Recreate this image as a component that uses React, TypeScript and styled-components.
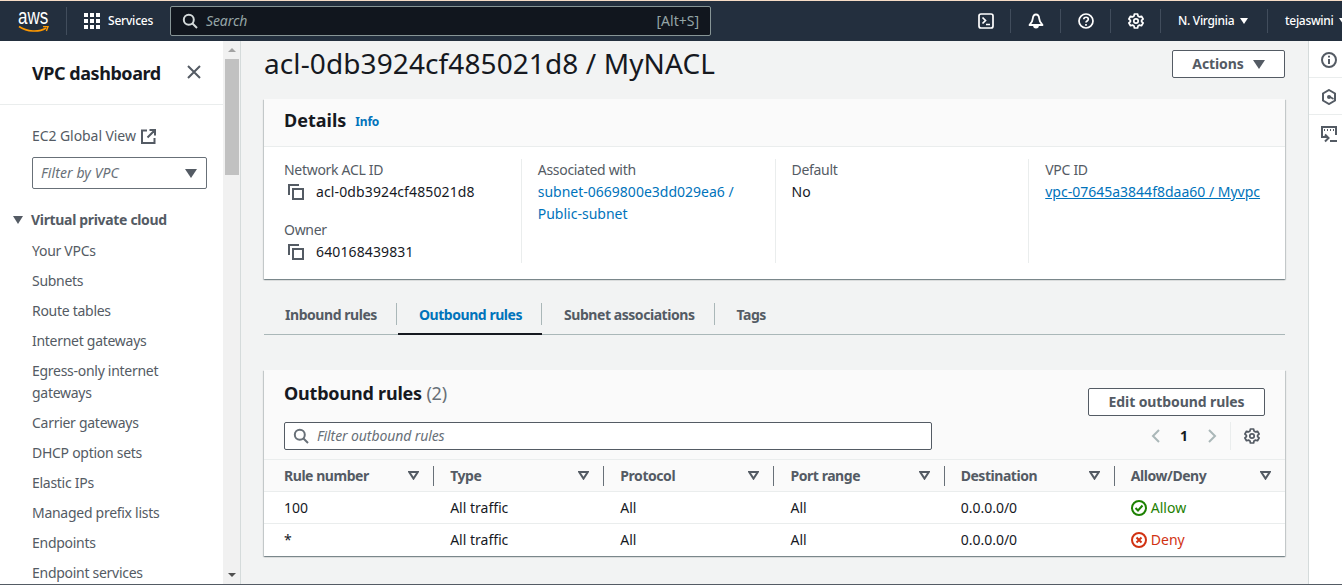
import styled, { createGlobalStyle } from "styled-components";

const GlobalStyle = createGlobalStyle`
  html, body {
    margin: 0;
    padding: 0;
    height: 585px;
    overflow: hidden;
    background: #f2f3f3;
    font-family: "Noto Sans", "Open Sans", sans-serif;
    font-size: 14px;
    line-height: 22px;
    color: #16191f;
  }
  * { box-sizing: border-box; }
`;

const Page = styled.div`
  width: 1342px;
  height: 585px;
  display: flex;
  flex-direction: column;
  overflow: hidden;
  border-top: 1px solid #f6dcc6;
  border-bottom: 1px solid #545b64;
`;

const TopNav = styled.header`
  height: 40px;
  flex: none;
  background: #232f3e;
  display: flex;
  align-items: center;
  color: #fff;
  overflow: hidden;
`;

const AwsLogo = styled.div`
  width: 67px;
  flex: none;
  height: 28px;
  padding-left: 18px;
  border-right: 1px solid #414d5c;
  display: flex;
  flex-direction: column;
  line-height: 16px;
  font-family: "Liberation Sans", sans-serif;
  font-size: 17px;
  span { display: block; transform: scaleY(1.3); transform-origin: 0 60%; margin-top: 3px; }
  svg { margin-top: -1px; }
`;

const ServicesLink = styled.div`
  display: flex;
  align-items: center;
  gap: 8px;
  padding-left: 17px;
  width: 103px;
  flex: none;
  font-size: 12px;
  font-weight: 500;
  letter-spacing: -0.2px;
`;

const SearchBox = styled.div`
  width: 541px;
  height: 30px;
  flex: none;
  background: #11161e;
  border: 1px solid #879596;
  border-radius: 2px;
  display: flex;
  align-items: center;
  padding: 0 11px 0 11px;
  gap: 8px;
  color: #95a5a6;
  font-size: 14px;
  span:first-of-type { font-style: italic; flex: 1; letter-spacing: -0.1px; }
`;

const NavIcons = styled.div`
  display: flex;
  align-items: center;
  margin-left: 250px;
  flex: none;
`;

const NavIconCell = styled.div`
  width: 50px;
  height: 24px;
  display: flex;
  align-items: center;
  justify-content: center;
  border-right: 1px solid #414d5c;
`;

const NavMenu = styled.div<{ $width: number }>`
  width: ${(p) => p.$width}px;
  height: 24px;
  flex: none;
  display: flex;
  align-items: center;
  gap: 6px;
  padding-left: 17px;
  font-size: 12px;
  font-weight: 500;
  letter-spacing: -0.3px;
  white-space: nowrap;
  border-right: 1px solid #414d5c;
  &:last-child { border-right: none; }
`;

const NavCaret = styled.i`
  display: block;
  width: 0;
  height: 0;
  border-left: 4px solid transparent;
  border-right: 4px solid transparent;
  border-top: 6px solid #fff;
`;

const Body = styled.div`
  flex: 1;
  min-height: 0;
  display: flex;
`;

const Sidebar = styled.aside`
  width: 223px;
  flex: none;
  background: #fff;
  overflow: hidden;
`;

const SidebarHeader = styled.div`
  height: 64px;
  border-bottom: 1px solid #eaeded;
  padding: 20px 21px 0 32px;
  display: flex;
  justify-content: space-between;
  align-items: flex-start;
  font-size: 18px;
  font-weight: 700;
  line-height: 24px;
  letter-spacing: -0.45px;
  svg { margin-top: 3px; }
`;

const GlobalLink = styled.div`
  margin: 20px 0 10px 32px;
  display: flex;
  align-items: center;
  gap: 5px;
  color: #545b64;
  letter-spacing: -0.07px;
`;

const VpcSelect = styled.div`
  margin-left: 32px;
  width: 175px;
  height: 32px;
  background: #fff;
  border: 1px solid #687078;
  border-radius: 2px;
  padding: 0 9px 0 8px;
  display: flex;
  align-items: center;
  justify-content: space-between;
  color: #687078;
  font-style: italic;
  letter-spacing: 0.1px;
`;

const Caret = styled.i<{ $color?: string }>`
  display: block;
  width: 0;
  height: 0;
  border-left: 6px solid transparent;
  border-right: 6px solid transparent;
  border-top: 9px solid ${(p) => p.$color ?? "#545b64"};
`;

const NavGroupTitle = styled.div`
  margin: 20px 0 0 13px;
  display: flex;
  align-items: center;
  gap: 8px;
  font-weight: 700;
  font-size: 14px;
  letter-spacing: -0.33px;
  color: #545b64;
  i { border-left-width: 5px; border-right-width: 5px; border-top-width: 8px; }
`;

const NavList = styled.ul`
  list-style: none;
  margin: 9px 0 0;
  padding: 0 0 0 32px;
`;

const NavItem = styled.li`
  width: 150px;
  padding-bottom: 8px;
  color: #545b64;
  letter-spacing: -0.28px;
`;

const ScrollTrack = styled.div`
  width: 17px;
  flex: none;
  background: #f1f1f1;
  display: flex;
  flex-direction: column;
  align-items: center;
  padding-top: 7px;
`;

const ScrollThumb = styled.div`
  width: 14px;
  height: 116px;
  margin-top: 7px;
  background: #c1c1c1;
  flex: none;
`;

const ScrollArrow = styled.i<{ $down?: boolean }>`
  display: block;
  width: 0;
  height: 0;
  border-left: 4px solid transparent;
  border-right: 4px solid transparent;
  ${(p) => (p.$down ? "border-top: 4px solid #505050; margin-top: auto; margin-bottom: 7px;" : "border-bottom: 4px solid #a3a3a3;")}
`;

const Main = styled.main`
  flex: 1;
  min-width: 0;
  border-left: 1px solid #d5dbdb;
  padding: 0 23px;
`;

const TitleRow = styled.div`
  height: 58px;
  display: flex;
  justify-content: space-between;
  padding-top: 9px;
`;

const Title = styled.h1`
  margin: 0;
  font-size: 28px;
  line-height: 26px;
  font-weight: 400;
  letter-spacing: 0.1px;
`;

const OutlineButton = styled.button<{ $width: number }>`
  width: ${(p) => p.$width}px;
  height: 28px;
  flex: none;
  display: flex;
  align-items: center;
  justify-content: center;
  gap: 9px;
  background: #fff;
  border: 1px solid #545b64;
  border-radius: 2px;
  color: #545b64;
  font-family: inherit;
  font-size: 14px;
  font-weight: 700;
  letter-spacing: -0.1px;
  line-height: 20px;
  padding: 0;
`;

const Card = styled.section`
  background: #fff;
  box-shadow: 0 1px 1px 0 rgba(0, 28, 36, 0.3), 1px 1px 1px 0 rgba(0, 28, 36, 0.15), -1px 1px 1px 0 rgba(0, 28, 36, 0.15);
`;

const CardHeader = styled.div`
  height: 48px;
  padding: 9px 20px 0;
  background: #fafafa;
  border-bottom: 1px solid #eaeded;
  display: flex;
  align-items: flex-start;
  gap: 9px;
`;

const CardTitle = styled.h2<{ $tight?: boolean }>`
  margin: 0;
  font-size: 18px;
  line-height: 24px;
  font-weight: 700;
  ${(p) => (p.$tight ? "letter-spacing: -0.2px; margin-top: -7px;" : "")}
  span { font-weight: 400; color: #687078; }
`;

const InfoLink = styled.a`
  font-size: 12px;
  font-weight: 700;
  letter-spacing: -0.2px;
  color: #0073bb;
  margin-top: 3px;
`;

const DetailGrid = styled.div`
  display: grid;
  grid-template-columns: repeat(4, 1fr);
  padding: 12px 3px 16px;
`;

const DetailColumn = styled.div`
  padding-left: 16px;
  border-left: 1px solid #eaeded;
  min-height: 104px;
  &:first-child { border-left-color: transparent; }
`;

const Label = styled.div<{ $gap?: boolean }>`
  color: #545b64;
  letter-spacing: -0.3px;
  margin-top: ${(p) => (p.$gap ? "16px" : "0")};
`;

const CopyValue = styled.div`
  display: flex;
  align-items: center;
  gap: 12px;
  padding-left: 4px;
  letter-spacing: 0.12px;
`;

const DetailLink = styled.a<{ $underline?: boolean }>`
  display: block;
  color: #0073bb;
  text-decoration: ${(p) => (p.$underline ? "underline" : "none")};
  white-space: pre-line;
`;

const TabBar = styled.nav`
  display: flex;
  height: 40px;
  margin-top: 16px;
  border-bottom: 1px solid #aab7b8;
`;

const Tab = styled.div<{ $active?: boolean }>`
  position: relative;
  padding: 9px 21px 0;
  height: 39px;
  font-weight: 700;
  letter-spacing: -0.45px;
  color: ${(p) => (p.$active ? "#0073bb" : "#545b64")};
  white-space: nowrap;
  &:first-child { padding-right: 20px; }
  &:nth-child(2) { padding-left: 22px; padding-right: 20px; }
  &:nth-child(3) { padding-left: 22px; }
  &:not(:last-child)::after {
    content: "";
    position: absolute;
    right: 0;
    top: 8px;
    height: 22px;
    width: 1px;
    background: #aab7b8;
  }
  ${(p) =>
    p.$active
      ? `&::before {
    content: "";
    position: absolute;
    left: 1px;
    right: 0;
    bottom: -1px;
    height: 2px;
    background: #16191f;
  }`
      : ""}
`;

const RulesCard = styled(Card)`
  margin-top: 35px;
`;

const RulesHeader = styled.div`
  height: 90px;
  background: #fafafa;
  border-bottom: 1px solid #eaeded;
  padding: 18px 20px 0;
  display: grid;
  grid-template-columns: 648px 1fr;
  grid-template-rows: 28px 28px;
  row-gap: 6px;
`;

const FilterBox = styled.div`
  grid-column: 1;
  background: #fff;
  border: 1px solid #545b64;
  border-radius: 2px;
  display: flex;
  align-items: center;
  gap: 8px;
  padding: 0 8px;
  font-style: italic;
  letter-spacing: -0.1px;
  color: #687078;
`;

const RightAlign = styled.div`
  grid-column: 2;
  display: flex;
  justify-content: flex-end;
  align-items: center;
`;

const Pager = styled.div`
  display: flex;
  align-items: center;
  height: 28px;
  font-weight: 700;
  font-size: 14px;
  gap: 19px;
  padding-right: 5px;
`;

const PagerGear = styled.div`
  height: 28px;
  display: flex;
  align-items: center;
  padding-left: 13px;
  margin-left: -6px;
  border-left: 1px solid #eaeded;
`;

const RulesTable = styled.table`
  width: 100%;
  table-layout: fixed;
  border-collapse: collapse;
`;

const HeadCell = styled.th`
  height: 31px;
  padding: 1px 0 0 16px;
  background: #fafafa;
  border-bottom: 1px solid #eaeded;
  color: #545b64;
  font-size: 14px;
  font-weight: 700;
  letter-spacing: -0.45px;
  text-align: left;
  &:first-child { padding-left: 20px; }
`;

const HeadInner = styled.div`
  display: flex;
  justify-content: space-between;
  align-items: center;
  height: 20px;
  padding-right: 14px;
  border-right: 1px solid #687078;
  &.last { border-right: none; }
`;

const Cell = styled.td`
  height: 32px;
  padding: 1px 0 0 16px;
  border-bottom: 1px solid #eaeded;
  &:first-child { padding-left: 20px; }
  tr:last-child > & { border-bottom: none; height: 33px; padding-top: 0; }
`;

const Status = styled.div<{ $color: string }>`
  display: flex;
  align-items: center;
  gap: 4px;
  color: ${(p) => p.$color};
`;

const RightRail = styled.aside`
  width: 34px;
  flex: none;
  background: #fff;
  border-left: 1px solid #d5dbdb;
`;

const RailItem = styled.div`
  height: 37px;
  display: flex;
  align-items: center;
  justify-content: center;
  padding: 1px 0 0 7px;
  border-bottom: 1px solid #eaeded;
  &:last-child { border-bottom: none; }
`;

const CopyIcon = () => (
  <svg width="16" height="16" viewBox="0 0 16 16" fill="none" stroke="#545b64" strokeWidth="2">
    <path d="M11 1H1v10" />
    <rect x="5" y="5" width="10" height="10" />
  </svg>
);

const Gear = ({ color, size = 16 }: { color: string; size?: number }) => (
  <svg width={size} height={size} viewBox="0 0 16 16" fill="none" stroke={color} strokeWidth="1.7" strokeLinejoin="round">
    <circle cx="8" cy="8" r="2.2" />
    <path d="M6.4 1h3.2l.4 2 1.5.9 2-.6 1.6 2.7-1.5 1.3v1.4l1.5 1.3-1.6 2.7-2-.6-1.5.9-.4 2H6.4l-.4-2-1.5-.9-2 .6L.9 10l1.5-1.3V7.3L.9 6l1.6-2.7 2 .6 1.5-.9z" />
  </svg>
);

const SearchIcon = ({ color }: { color: string }) => (
  <svg width="16" height="16" viewBox="0 0 16 16" fill="none" stroke={color} strokeWidth="2">
    <circle cx="6.8" cy="6.8" r="5" />
    <path d="M10.5 10.5L15 15" />
  </svg>
);

const FilterCaret = () => (
  <svg width="11" height="9" viewBox="0 0 11 9" fill="none" stroke="#545b64" strokeWidth="2">
    <path d="M1.2 1h8.6L5.5 7.6z" />
  </svg>
);

const Chevron = ({ d }: { d: string }) => (
  <svg width="10" height="14" viewBox="0 0 10 14" fill="none" stroke="#aab7b8" strokeWidth="2">
    <path d={d} />
  </svg>
);

const sideItems = [
  "Your VPCs",
  "Subnets",
  "Route tables",
  "Internet gateways",
  "Egress-only internet gateways",
  "Carrier gateways",
  "DHCP option sets",
  "Elastic IPs",
  "Managed prefix lists",
  "Endpoints",
  "Endpoint services",
];

const columns = ["Rule number", "Type", "Protocol", "Port range", "Destination", "Allow/Deny"];

const rows = [
  { rule: "100", allow: true },
  { rule: "*", allow: false },
];

export default function App() {
  return (
    <>
      <GlobalStyle />
      <Page>
        <TopNav>
          <AwsLogo>
            <span>aws</span>
            <svg width="32" height="9" viewBox="0 0 32 9" fill="none">
              <path d="M1 1.5C9 7 21 7.5 28 3" stroke="#ff9900" strokeWidth="1.6" />
              <path d="M25 1.6h5l-1.6 4.4" stroke="#ff9900" strokeWidth="1.4" />
            </svg>
          </AwsLogo>
          <ServicesLink>
            <svg width="16" height="16" viewBox="0 0 16 16" fill="#fff">
              {[0, 6, 12].flatMap((y) =>
                [0, 6, 12].map((x) => <rect key={`${x}-${y}`} x={x} y={y} width="4" height="4" />)
              )}
            </svg>
            Services
          </ServicesLink>
          <SearchBox>
            <SearchIcon color="#d5dbdb" />
            <span>Search</span>
            <span>[Alt+S]</span>
          </SearchBox>
          <NavIcons>
            <NavIconCell>
              <svg width="16" height="16" viewBox="0 0 16 16" fill="none" stroke="#fff" strokeWidth="1.7">
                <rect x="1" y="1" width="14" height="14" rx="2" />
                <path d="M4.5 4.5L7.5 7.5 4.5 10.5M8 11.5h4" />
              </svg>
            </NavIconCell>
            <NavIconCell>
              <svg width="16" height="16" viewBox="0 0 16 16" fill="none" stroke="#fff" strokeWidth="1.8" strokeLinejoin="round">
                <path d="M8 1.5C5.800 1.500 5 3.300 4.800 5.500L4 8.500 1.500 12h13L12 8.500l-.8-3C11 3.300 10.200 1.500 8 1.500z" />
                <path d="M6 12.500a2 2 0 0 0 4 0z" fill="#fff" />
              </svg>
            </NavIconCell>
            <NavIconCell>
              <svg width="16" height="16" viewBox="0 0 16 16" fill="none" stroke="#fff" strokeWidth="1.7">
                <circle cx="8" cy="8" r="7" />
                <path d="M5.800 6.200C5.800 3.600 10.300 3.600 10.300 6.200c0 1.800-2.300 1.700-2.300 3.400" />
                <path d="M8 11v1.700" />
              </svg>
            </NavIconCell>
            <NavIconCell>
              <Gear color="#fff" />
            </NavIconCell>
          </NavIcons>
          <NavMenu $width={107}>
            N. Virginia <NavCaret />
          </NavMenu>
          <NavMenu $width={76}>
            tejaswini <NavCaret />
          </NavMenu>
        </TopNav>
        <Body>
          <Sidebar>
            <SidebarHeader>
              VPC dashboard
              <svg width="16" height="16" viewBox="0 0 16 16" fill="none" stroke="#545b64" strokeWidth="2">
                <path d="M2 2l12 12M14 2L2 14" />
              </svg>
            </SidebarHeader>
            <GlobalLink>
              EC2 Global View
              <svg width="15" height="15" viewBox="0 0 15 15" fill="none" stroke="#545b64" strokeWidth="2">
                <path d="M6 1.500H1v12.500h12.500V9M8.500 1h5.500v5.500M14 1L6.500 8.500" />
              </svg>
            </GlobalLink>
            <VpcSelect>
              Filter by VPC
              <Caret />
            </VpcSelect>
            <NavGroupTitle>
              <Caret />
              Virtual private cloud
            </NavGroupTitle>
            <NavList>
              {sideItems.map((item) => (
                <NavItem key={item}>{item}</NavItem>
              ))}
            </NavList>
          </Sidebar>
          <ScrollTrack>
            <ScrollArrow />
            <ScrollThumb />
            <ScrollArrow $down />
          </ScrollTrack>
          <Main>
            <TitleRow>
              <Title>acl-0db3924cf485021d8 / MyNACL</Title>
              <OutlineButton $width={113}>
                Actions
                <Caret />
              </OutlineButton>
            </TitleRow>
            <Card>
              <CardHeader>
                <CardTitle>Details</CardTitle>
                <InfoLink>Info</InfoLink>
              </CardHeader>
              <DetailGrid>
                <DetailColumn>
                  <Label>Network ACL ID</Label>
                  <CopyValue>
                    <CopyIcon />
                    acl-0db3924cf485021d8
                  </CopyValue>
                  <Label $gap>Owner</Label>
                  <CopyValue>
                    <CopyIcon />
                    640168439831
                  </CopyValue>
                </DetailColumn>
                <DetailColumn>
                  <Label>Associated with</Label>
                  <DetailLink>{"subnet-0669800e3dd029ea6 /\nPublic-subnet"}</DetailLink>
                </DetailColumn>
                <DetailColumn>
                  <Label>Default</Label>
                  No
                </DetailColumn>
                <DetailColumn>
                  <Label>VPC ID</Label>
                  <DetailLink $underline>vpc-07645a3844f8daa60 / Myvpc</DetailLink>
                </DetailColumn>
              </DetailGrid>
            </Card>
            <TabBar>
              <Tab>Inbound rules</Tab>
              <Tab $active>Outbound rules</Tab>
              <Tab>Subnet associations</Tab>
              <Tab>Tags</Tab>
            </TabBar>
            <RulesCard>
              <RulesHeader>
                <CardTitle $tight>
                  Outbound rules <span>(2)</span>
                </CardTitle>
                <RightAlign>
                  <OutlineButton $width={177}>Edit outbound rules</OutlineButton>
                </RightAlign>
                <FilterBox>
                  <SearchIcon color="#687078" />
                  Filter outbound rules
                </FilterBox>
                <RightAlign>
                  <Pager>
                    <Chevron d="M8 1L2 7l6 6" />
                    1
                    <Chevron d="M2 1l6 6-6 6" />
                    <PagerGear>
                      <Gear color="#545b64" />
                    </PagerGear>
                  </Pager>
                </RightAlign>
              </RulesHeader>
              <RulesTable>
                <thead>
                  <tr>
                    {columns.map((col, i) => (
                      <HeadCell key={col}>
                        <HeadInner className={i === columns.length - 1 ? "last" : ""}>
                          {col}
                          <FilterCaret />
                        </HeadInner>
                      </HeadCell>
                    ))}
                  </tr>
                </thead>
                <tbody>
                  {rows.map((row) => (
                    <tr key={row.rule}>
                      <Cell>{row.rule}</Cell>
                      <Cell>All traffic</Cell>
                      <Cell>All</Cell>
                      <Cell>All</Cell>
                      <Cell>0.0.0.0/0</Cell>
                      <Cell>
                        {row.allow ? (
                          <Status $color="#1d8102">
                            <svg width="16" height="16" viewBox="0 0 16 16" fill="none" stroke="#1d8102" strokeWidth="2">
                              <circle cx="8" cy="8" r="7" />
                              <path d="M4.500 8l2.500 2.500 4.500-5" />
                            </svg>
                            Allow
                          </Status>
                        ) : (
                          <Status $color="#d13212">
                            <svg width="16" height="16" viewBox="0 0 16 16" fill="none" stroke="#d13212" strokeWidth="2">
                              <circle cx="8" cy="8" r="7" />
                              <path d="M5.500 5.500l5 5M10.500 5.500l-5 5" />
                            </svg>
                            Deny
                          </Status>
                        )}
                      </Cell>
                    </tr>
                  ))}
                </tbody>
              </RulesTable>
            </RulesCard>
          </Main>
          <RightRail>
            <RailItem>
              <svg width="16" height="16" viewBox="0 0 16 16" fill="none" stroke="#545b64" strokeWidth="2">
                <circle cx="8" cy="8" r="7" />
                <path d="M8 7v5M8 3.800v1.800" />
              </svg>
            </RailItem>
            <RailItem>
              <svg width="16" height="16" viewBox="0 0 16 16" fill="none" stroke="#545b64" strokeWidth="2">
                <path d="M8 1l6 3.500v7L8 15l-6-3.500v-7z" />
                <circle cx="8" cy="8" r="2" fill="#545b64" stroke="none" />
                <path d="M8.500 7.500l4 2.500" strokeWidth="1.500" />
              </svg>
            </RailItem>
            <RailItem>
              <svg width="18" height="18" viewBox="0 0 18 18" fill="none" stroke="#545b64" strokeWidth="2">
                <path d="M7 12H2V2h14v8" />
                <path d="M4 5h1M7 5h1M10 5h1M13 5h1" />
                <path d="M5 9.500L8.500 13 5 16.500M10 16h7" />
              </svg>
            </RailItem>
          </RightRail>
        </Body>
      </Page>
    </>
  );
}
